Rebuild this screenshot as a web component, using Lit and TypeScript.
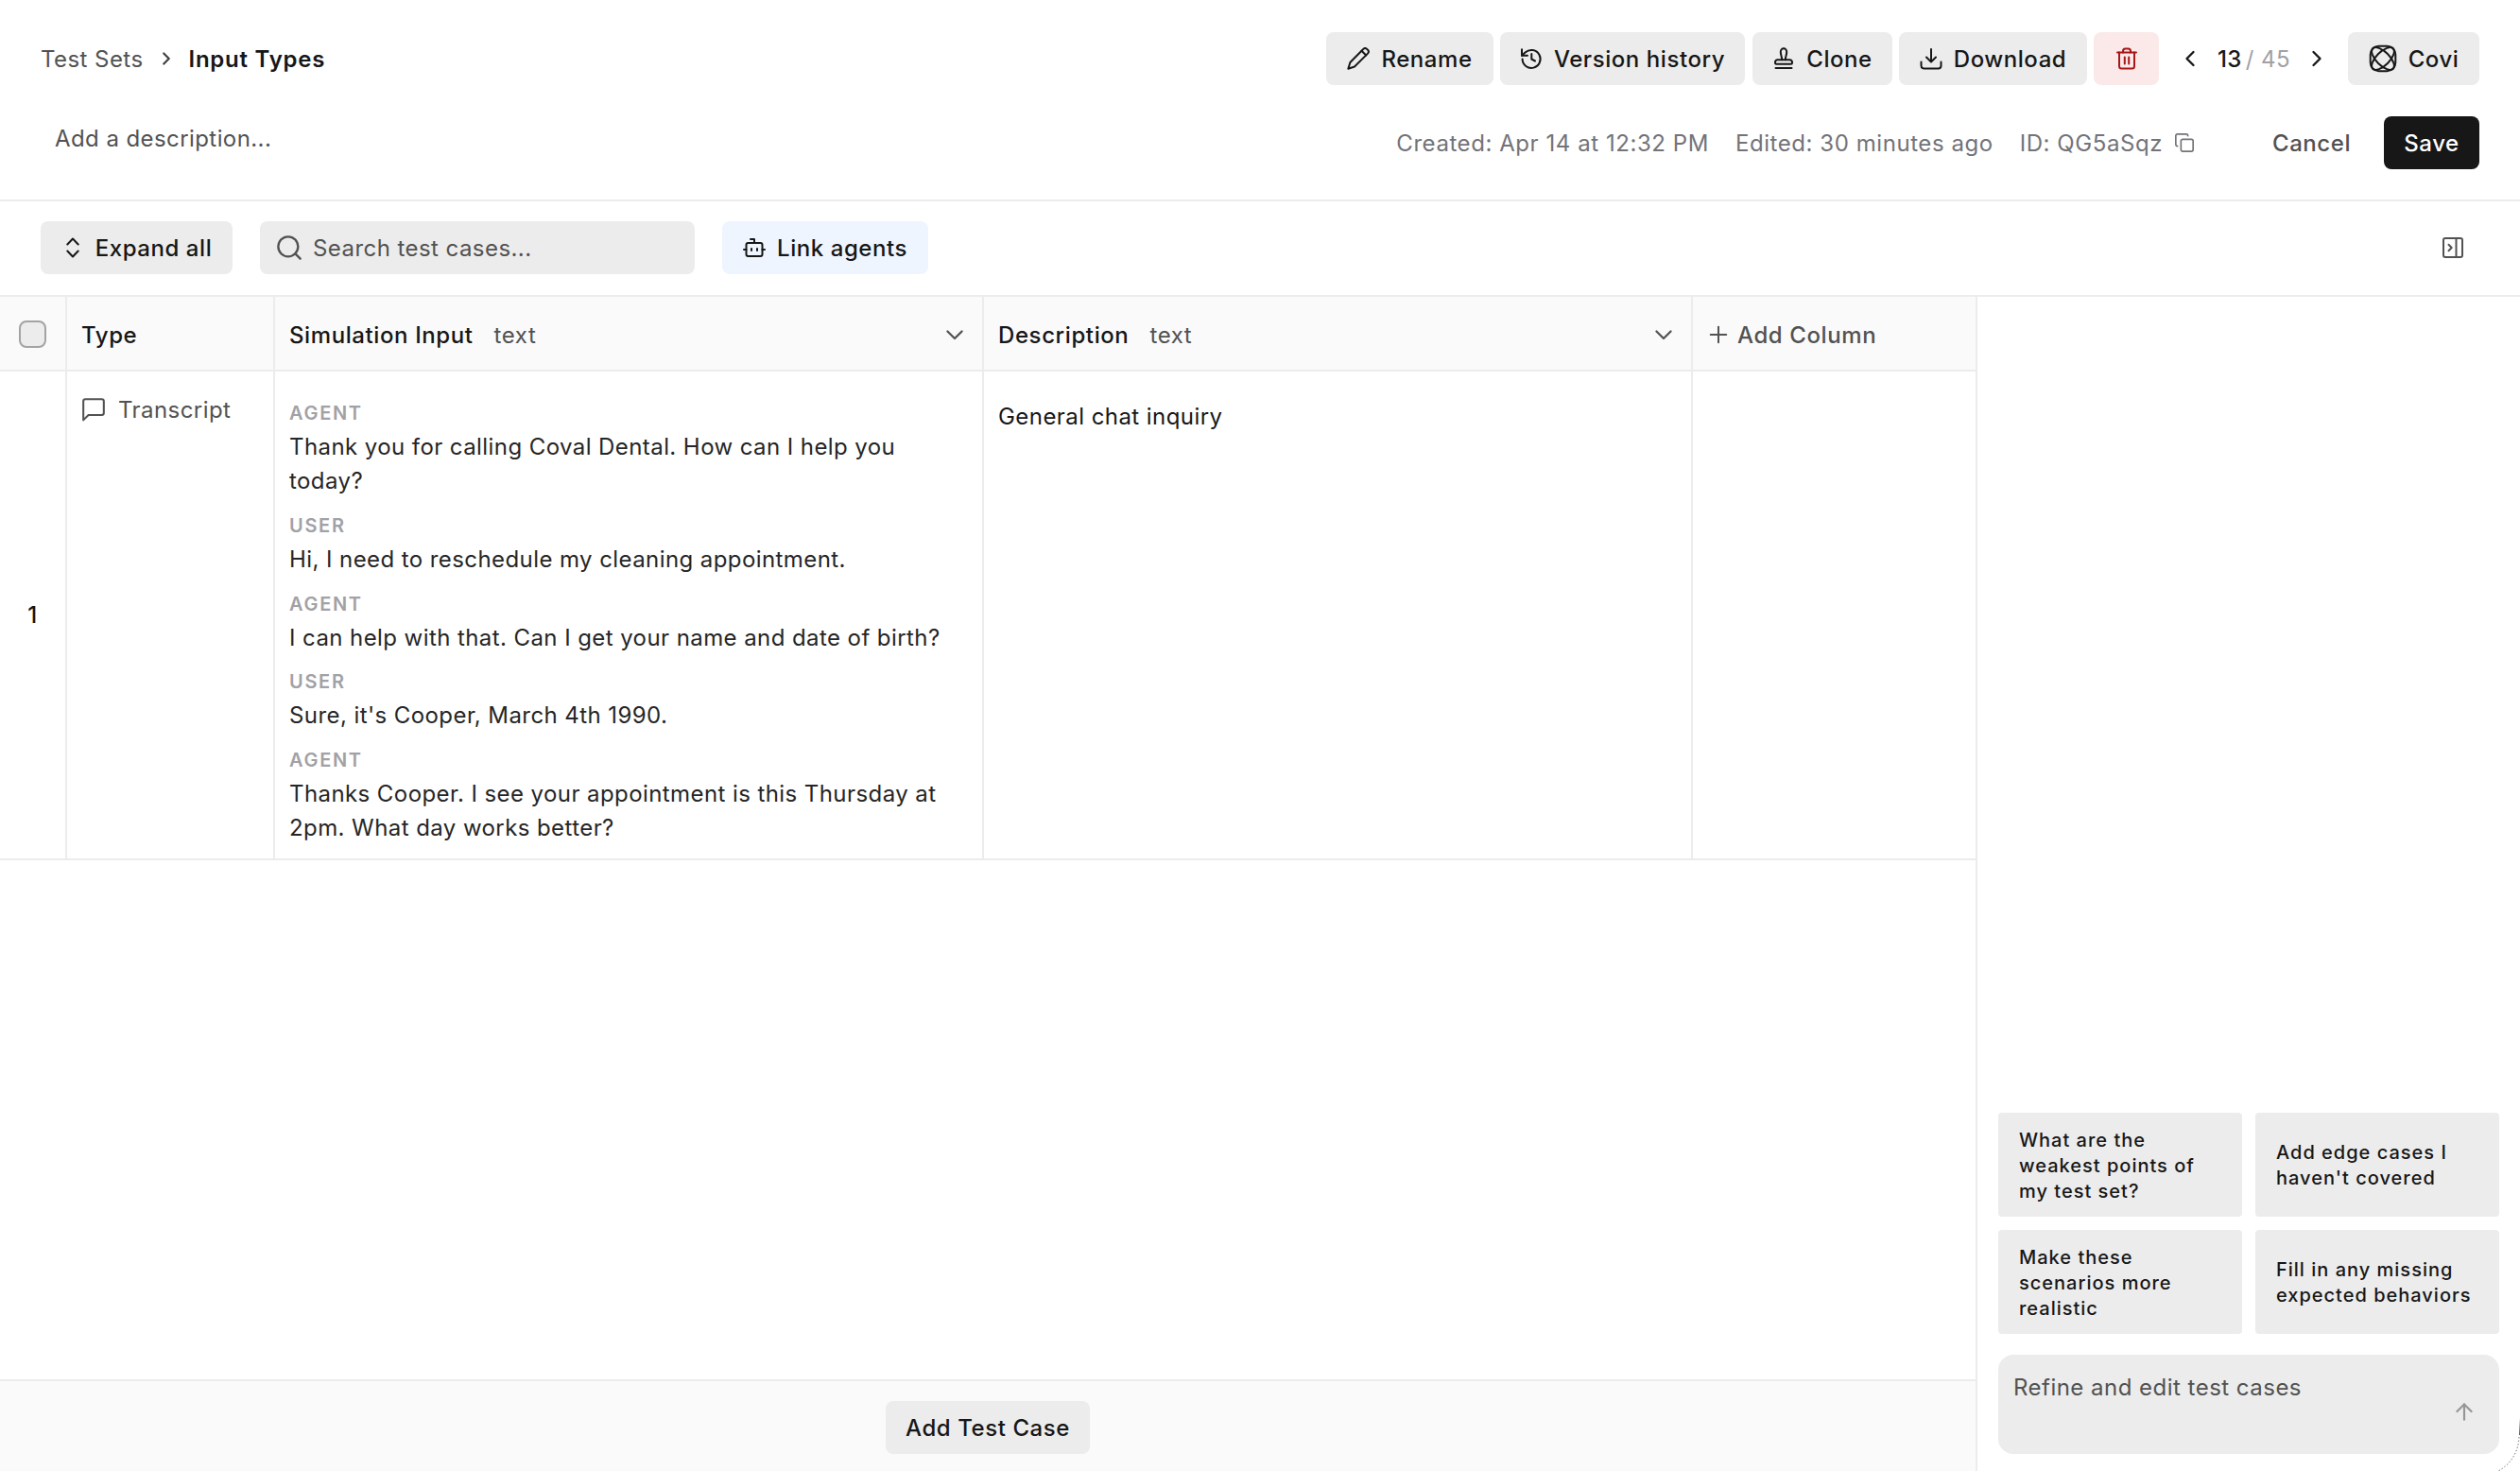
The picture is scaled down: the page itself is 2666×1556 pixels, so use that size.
import { LitElement, html, css, svg } from "lit";
import { customElement } from "lit/decorators.js";

const icon = (size: number, body: unknown, sw = 2, cls = "") => html`<svg class=${cls} width=${size} height=${size} viewBox="0 0 24 24" fill="none" stroke="currentColor" stroke-width=${sw} stroke-linecap="round" stroke-linejoin="round">${body}</svg>`;

const I = {
  pencil: svg`<path d="M16 3.200 17.300 1.900a2.700 2.700 0 0 1 3.800 0l.9.9a2.700 2.700 0 0 1 0 3.800L8 20.500 1.300 22.700 3.400 16Z"/><path d="M15.500 3.800 20.200 8.500"/>`,
  history: svg`<path d="M2.600 12.500a9.500 9.500 0 1 0 3.200-7.200L2 8.800"/><path d="M2 2.300v6.500h6"/><path d="M12.300 7v5.500l3.700 2"/>`,
  stamp: svg`<path d="M3.500 22h17"/><path d="M10.200 13.200c0-3.500-1.400-5-1.400-8.200a3.200 3.700 0 0 1 6.400 0c0 3.200-1.400 4.700-1.400 8.200"/><path d="M5.500 13.200h13a2.500 2.500 0 0 1 2.500 2.500v.5a1.500 1.500 0 0 1-1.500 1.500h-15A1.500 1.500 0 0 1 3 16.200v-.5a2.500 2.500 0 0 1 2.500-2.500Z"/>`,
  download: svg`<path d="M12 2v13"/><path d="m7 10.500 5 5 5-5"/><path d="M1.500 15.500v4a3 3 0 0 0 3 3h15a3 3 0 0 0 3-3v-4"/>`,
  trash: svg`<path d="M2 5.500h20"/><path d="M20 5.500V20a2.500 2.500 0 0 1-2.500 2.500h-11A2.500 2.500 0 0 1 4 20V5.500"/><path d="M8 5.500V4a2.500 2.500 0 0 1 2.500-2.500h3A2.500 2.500 0 0 1 16 4v1.500"/><path d="M9.800 10.500v7M14.200 10.500v7"/>`,
  left: svg`<path d="m15 18-6-6 6-6"/>`,
  right: svg`<path d="m9 18 6-6-6-6"/>`,
  down: svg`<path d="m5.500 9 6.500 6.500L18.500 9"/>`,
  updown: svg`<path d="m6.300 15.500 5.700 6 5.700-6"/><path d="m6.300 8.500 5.700-6 5.700 6"/>`,
  search: svg`<circle cx="11" cy="11" r="9"/><path d="m22 22-4.500-4.500"/>`,
  bot: svg`<path d="M12 7V3H8"/><rect width="17" height="14" x="3.500" y="7" rx="2"/><path d="M1 14h2.500M20.500 14H23M15 13v2M9 13v2"/>`,
  copy: svg`<rect width="14" height="14" x="8" y="8" rx="2"/><path d="M4 16c-1.100 0-2-.9-2-2V4c0-1.100.9-2 2-2h10c1.100 0 2 .9 2 2"/>`,
  panel: svg`<rect width="20" height="20" x="2" y="2" rx="2"/><path d="M15.500 2v20"/><path d="m7.500 8.800 3.200 3.200-3.200 3.200"/>`,
  message: svg`<path d="M22 15.500a2 2 0 0 1-2 2H7l-5 5V4a2 2 0 0 1 2-2h16a2 2 0 0 1 2 2z"/>`,
  plus: svg`<path d="M3 12h18M12 3v18"/>`,
  up: svg`<path d="m5 12 7-7 7 7"/><path d="M12 20V5"/>`,
};

const covi = html`<svg width="30" height="30" viewBox="0 0 30 30" fill="none" stroke="currentColor" stroke-width="2"><rect x="1.700" y="1.700" width="26.600" height="26.600" rx="9"/><ellipse cx="15" cy="15" rx="15.300" ry="7" transform="rotate(45 15 15)"/><ellipse cx="15" cy="15" rx="15.300" ry="7" transform="rotate(-45 15 15)"/></svg>`;

const TURNS = [
  ["AGENT", "Thank you for calling Coval Dental. How can I help you today?"],
  ["USER", "Hi, I need to reschedule my cleaning appointment."],
  ["AGENT", "I can help with that. Can I get your name and date of birth?"],
  ["USER", "Sure, it's Cooper, March 4th 1990."],
  ["AGENT", "Thanks Cooper. I see your appointment is this Thursday at 2pm. What day works better?"],
];

const PROMPTS = [
  "What are the weakest points of my test set?",
  "Add edge cases I haven't covered",
  "Make these scenarios more realistic",
  "Fill in any missing expected behaviors",
];

@customElement("app-root")
export class AppRoot extends LitElement {
  static styles = css`
    :host { display: flex; flex-direction: column; width: 2666px; height: 1556px; overflow: hidden; position: relative;
      background: #fff; color: #171717; font: 400 24px/36px Inter, sans-serif; letter-spacing: 0.44px; }
    * { box-sizing: border-box; }
    svg { display: block; flex: none; }
    .header { height: 213px; flex: none; border-bottom: 2px solid #ececec; display: flex; flex-direction: column; padding: 34px 43px 0; }
    .row { display: flex; align-items: center; height: 56px; }
    .meta { margin-top: 33px; color: #737378; letter-spacing: 0.56px; }
    .row > span, .pager > span, .search > span, .composer > span { padding-top: 2px; }
    .grow { flex: 1; }
    .crumb { color: #525252; }
    .chev { margin: 0 13px; color: #404040; }
    .title { font-weight: 600; letter-spacing: 0.75px; }
    .btn { display: flex; align-items: center; justify-content: center; gap: 12px; height: 56px; border-radius: 8px; background: #ececec; font-weight: 500; letter-spacing: 0.56px; white-space: nowrap; padding-top: 2px; }
    .btn svg { margin-bottom: 2px; }
    .b-rename { width: 177px; } .b-history { width: 259px; } .b-clone { width: 148px; margin-left: 1px; } .b-download { width: 199px; }
    .b-trash { width: 69px; background: #fbe9e9; color: #a81616; }
    .b-covi { width: 139px; }
    .actions { display: flex; gap: 7px; }
    .pager { display: flex; align-items: center; width: 200px; justify-content: center; }
    .now { font-weight: 500; margin-left: 15px; } .total { color: #a1a1a6; margin: 0 14px 0 4px; }
    .row > .desc { padding: 0 0 0 15px; align-self: flex-start; line-height: 47px; color: #525252; letter-spacing: 0.42px; }
    .created, .edited { margin-right: 28px; }
    .copy { margin: 0 82px 0 12px; }
    .cancel { font-weight: 500; color: #525252; margin-right: 35px; }
    .toolbar { height: 99px; flex: none; display: flex; align-items: flex-start; padding: 21px 43px 0; }
    .b-save { width: 101px; background: #171717; color: #fff; }
    .b-expand { width: 203px; margin-right: 29px; }
    .search { width: 460px; height: 56px; border-radius: 8px; background: #ececec; color: #525252; display: flex; align-items: center; gap: 11px; padding-left: 17px; margin-right: 29px; }
    .b-link { width: 218px; background: #eef5ff; }
    .panel-icon { margin: 16px 16px 0 0; color: #525252; }
    .body { flex: 1; display: flex; border-top: 2px solid #ececec; min-height: 0; }
    .main { width: 2090px; display: flex; flex-direction: column; }
    .grid { display: grid; grid-template-columns: 71px 220px 750px 750px 299px; }
    .grid > div { border-right: 2px solid #ececec; border-bottom: 2px solid #ececec; }
    .grid > .last { border-right: 0; }
    .grid > .th { height: 79px; background: #fafafa; display: flex; align-items: center; padding: 4px 15px 0; font-weight: 500; letter-spacing: 0.6px; }
    .th svg { color: #525252; margin-bottom: 1px; }
    .th .kind { font-weight: 400; color: #525252; margin-left: 22px; }
    .grid > .add { color: #525252; gap: 9px; padding-left: 16px; }
    .box { width: 29px; height: 29px; border: 2px solid #a3a3a3; border-radius: 8px; background: #ececec; margin-top: 2px; }
    .grid > .td { height: 517px; padding: 26px 15px 0; }
    .grid > .desc-cell { padding-top: 30px; }
    .grid > .center { display: flex; align-items: center; justify-content: center; padding: 0; font-weight: 500; }
    .type { display: flex; gap: 13px; height: 30px; align-items: center; color: #525252; }
    .type svg { margin-bottom: 2px; }
    .turn { margin-bottom: 10.8px; color: #262626; letter-spacing: 0.42px; }
    .role { font-size: 20px; line-height: 36px; font-weight: 600; letter-spacing: 1.7px; color: #a1a1a6; }
    .footer { margin-top: auto; height: 97px; border-top: 2px solid #ececec; background: #fafafa; display: flex; justify-content: center; padding-top: 21px; }
    .b-add { width: 216px; }
    .side { width: 576px; border-left: 2px solid #ececec; padding: 0 22px 18px; display: flex; flex-direction: column; justify-content: flex-end; }
    .prompts { display: grid; grid-template-columns: 258px 258px; grid-auto-rows: 110px; gap: 14px; }
    .prompt { background: #ececec; border-radius: 4px; display: flex; align-items: center; padding: 2px 22px 0; font-size: 20px; line-height: 27px; font-weight: 500; letter-spacing: 1px; }
    .composer { margin-top: 22px; height: 105px; width: 530px; border-radius: 16px; background: #ececec; color: #525252; padding: 15px 24px 0 16px; display: flex; justify-content: space-between; letter-spacing: 0.48px; }
    .send { margin-top: 32px; color: #969696; }
    .corner { position: absolute; right: 0; bottom: 0; }
  `;

  render() {
    return html`
      <div class="header">
        <div class="row">
          <span class="crumb">Test Sets</span>${icon(22, I.right, 2.4, "chev")}<span class="title">Input Types</span>
          <span class="grow"></span>
          <div class="actions">
            <div class="btn b-rename">${icon(24, I.pencil)}Rename</div>
            <div class="btn b-history">${icon(24, I.history)}Version history</div>
            <div class="btn b-clone">${icon(24, I.stamp)}Clone</div>
            <div class="btn b-download">${icon(24, I.download)}Download</div>
            <div class="btn b-trash">${icon(24, I.trash)}</div>
          </div>
          <div class="pager">${icon(28, I.left)}<span class="now">13</span><span class="total">/ 45</span>${icon(28, I.right)}</div>
          <div class="btn b-covi">${covi}Covi</div>
        </div>
        <div class="row meta">
          <span class="desc">Add a description...</span>
          <span class="grow"></span>
          <span class="created">Created: Apr 14 at 12:32 PM</span>
          <span class="edited">Edited: 30 minutes ago</span>
          <span>ID: QG5aSqz</span>${icon(22, I.copy, 1.8, "copy")}
          <span class="cancel">Cancel</span>
          <div class="btn b-save">Save</div>
        </div>
      </div>
      <div class="toolbar">
        <div class="btn b-expand">${icon(24, I.updown)}Expand all</div>
        <div class="search">${icon(28, I.search)}<span>Search test cases...</span></div>
        <div class="btn b-link">${icon(24, I.bot)}Link agents</div>
        <span class="grow"></span>
        ${icon(24, I.panel, 2, "panel-icon")}
      </div>
      <div class="body">
        <div class="main">
          <div class="grid">
            <div class="th center"><span class="box"></span></div>
            <div class="th">Type</div>
            <div class="th">Simulation Input<span class="kind">text</span><span class="grow"></span>${icon(28, I.down, 1.9)}</div>
            <div class="th">Description<span class="kind">text</span><span class="grow"></span>${icon(28, I.down, 1.9)}</div>
            <div class="th add last">${icon(22, I.plus, 2.2)}Add Column</div>
            <div class="td center">1</div>
            <div class="td"><div class="type">${icon(26, I.message, 1.9)}Transcript</div></div>
            <div class="td">${TURNS.map(([role, text]) => html`<div class="turn"><div class="role">${role}</div>${text}</div>`)}</div>
            <div class="td desc-cell">General chat inquiry</div>
            <div class="td last"></div>
          </div>
          <div class="footer"><div class="btn b-add">Add Test Case</div></div>
        </div>
        <div class="side">
          <div class="prompts">${PROMPTS.map((p) => html`<div class="prompt"><span>${p}</span></div>`)}</div>
          <div class="composer"><span>Refine and edit test cases</span>${icon(26, I.up, 2, "send")}</div>
        </div>
      </div>
      <svg class="corner" width="26" height="56" viewBox="0 0 26 56" fill="none">
        <defs><linearGradient id="edge" x1="0" y1="0" x2="0" y2="1"><stop offset="0" stop-color="#555" stop-opacity="0"/><stop offset="1" stop-color="#555"/></linearGradient></defs>
        <rect x="25" y="0" width="1" height="18" fill="url(#edge)"/>
        <path d="M25 20C24.500 36 16 49 3 56" stroke="#777" stroke-dasharray="1.500 2"/>
      </svg>
    `;
  }
}
